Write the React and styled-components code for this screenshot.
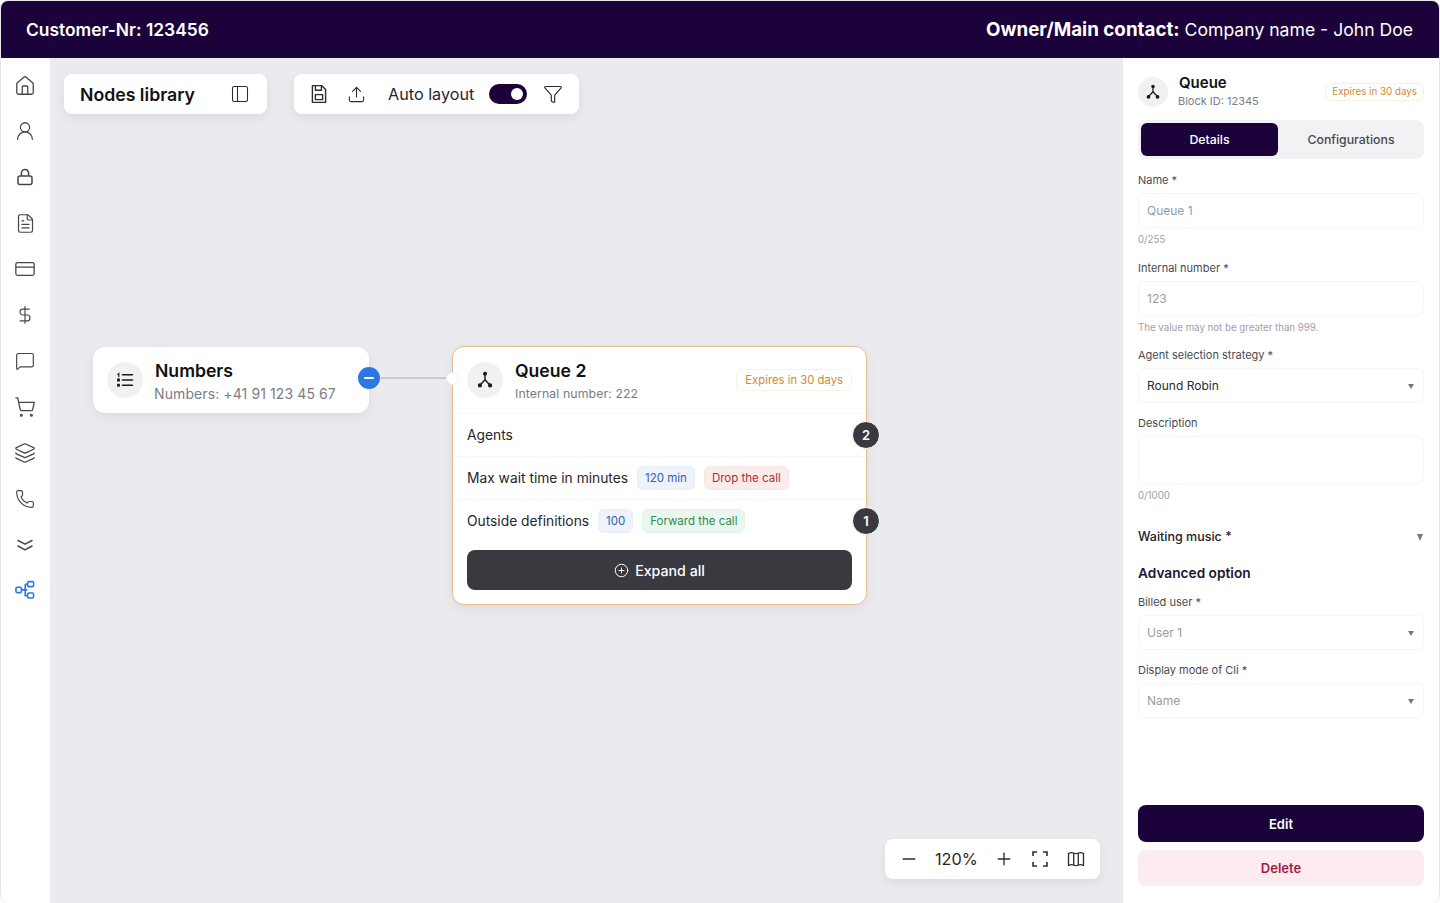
import React from 'react';
import styled, { createGlobalStyle } from 'styled-components';
import {
  House, UserRound, FileText, CreditCard, DollarSign, MessageSquare, ShoppingCart,
  Layers, Phone, PanelLeft, Upload, Funnel, Minus, Plus, CirclePlus,
} from 'lucide-react';

const Global = createGlobalStyle`
  html, body { margin: 0; padding: 0; background: #fff; }
  body { font-family: Inter, "Noto Sans", "Liberation Sans", sans-serif; color: #17171c; }
  * { box-sizing: border-box; }
`;

const Page = styled.div`
  width: 1440px;
  height: 903px;
  display: flex;
  flex-direction: column;
  overflow: hidden;
  border: 1px solid #e6e6ea;
  border-bottom: 0;
  border-radius: 8px;
  background: #ebebef;
`;

const Header = styled.header`
  height: 57px;
  flex: none;
  display: flex;
  align-items: center;
  justify-content: space-between;
  padding: 0 26px 0 25px;
  background: #1c023a;
  color: #fff;
`;

const Customer = styled.div`
  font-size: 17.4px;
  font-weight: 600;
`;

const Owner = styled.div`
  font-size: 17.6px;
  font-weight: 400;
  b { font-size: 18.8px; font-weight: 700; }
`;

const Body = styled.div`
  flex: 1;
  display: flex;
  min-height: 0;
`;

const Sidebar = styled.nav`
  width: 49px;
  flex: none;
  background: #fff;
  display: flex;
  flex-direction: column;
  align-items: center;
  padding: 17.5px 1px 0 0;
  gap: 25.9px;
`;

const SideIcon = styled.div`
  width: 20px;
  height: 20px;
  display: flex;
  align-items: center;
  justify-content: center;
  color: ${props => (props.$active ? '#2b78e4' : '#45454d')};
  svg { flex: none; display: block; }
`;

const Canvas = styled.main`
  position: relative;
  flex: 1;
  background: #ebebef;
`;

const FloatBar = styled.div`
  position: absolute;
  left: ${props => props.$x}px;
  top: ${props => props.$y}px;
  width: ${props => props.$w}px;
  height: 40px;
  display: flex;
  align-items: center;
  background: #fff;
  border-radius: 8px;
  box-shadow: 0 4px 10px rgba(30, 30, 50, 0.08);
  color: #2c2c33;
`;

const LibraryTitle = styled.span`
  flex: 1;
  font-size: 17.7px;
  font-weight: 600;
  color: #111;
  padding-left: 16px;
`;

const ToolLabel = styled.span`
  font-size: 16.2px;
  color: #26262c;
  margin: 0 15px 0 22px;
`;

const Toggle = styled.div`
  width: 38px;
  height: 20px;
  border-radius: 10px;
  background: #1c023a;
  display: flex;
  align-items: center;
  justify-content: flex-end;
  padding-right: 4px;
  margin-right: 16px;
  &::after {
    content: '';
    width: 12px;
    height: 12px;
    border-radius: 50%;
    background: #fff;
  }
`;

const ZoomValue = styled.span`
  font-size: 16.3px;
  color: #26262c;
  margin: 0 16px;
`;

const Node = styled.div`
  position: absolute;
  left: ${props => props.$x}px;
  top: ${props => props.$y}px;
  width: ${props => props.$w}px;
  background: #fff;
  border-radius: 12px;
  border: ${props => (props.$outlined ? '1px solid #e5bd8c' : '0')};
  box-shadow: 0 4px 12px rgba(30, 30, 50, 0.08);
`;

const NodeHead = styled.div`
  height: ${props => props.$h}px;
  display: flex;
  align-items: center;
  padding: 0 14px;
  border-bottom: ${props => (props.$line ? '1px solid #f7f7f8' : '0')};
`;

const IconCircle = styled.div`
  width: ${props => props.$size}px;
  height: ${props => props.$size}px;
  flex: none;
  border-radius: 50%;
  background: #f1f1f3;
  display: flex;
  align-items: center;
  justify-content: center;
  color: #18181d;
`;

const HeadText = styled.div`
  flex: 1;
  padding-left: 12px;
  padding-top: ${props => props.$drop || 0}px;
`;

const NodeTitle = styled.div`
  font-size: 17.6px;
  font-weight: 600;
  line-height: 22px;
  color: #111;
`;

const NodeSub = styled.div`
  margin-top: 3px;
  margin-left: ${props => (props.$wide ? -1 : 0)}px;
  font-size: ${props => (props.$wide ? 14 : 12.3)}px;
  line-height: 18px;
  color: #7c7c86;
  letter-spacing: 0.1px;
`;

const Badge = styled.span`
  display: inline-flex;
  align-items: center;
  height: ${props => props.$h || 24}px;
  padding: 0 ${props => props.$pad || 7}px;
  border-radius: 6px;
  border: 1px solid ${props => props.$line || 'transparent'};
  background: ${props => props.$bg || '#fff'};
  color: ${props => props.$color};
  font-size: ${props => props.$size || 11.5}px;
  white-space: nowrap;
`;

const NodeRow = styled.div`
  position: relative;
  height: ${props => props.$h || 43}px;
  display: flex;
  align-items: center;
  gap: 9px;
  padding: 0 14px;
  font-size: 13.8px;
  color: #26262c;
  border-bottom: ${props => (props.$line ? '1px solid #f7f7f8' : '0')};
`;

const Count = styled.span`
  position: absolute;
  right: -14px;
  top: 50%;
  width: 28px;
  height: 28px;
  margin-top: -14px;
  border-radius: 50%;
  background: #39393f;
  border: 1px solid #fff;
  color: #fff;
  font-size: 13px;
  font-weight: 600;
  display: flex;
  align-items: center;
  justify-content: center;
`;

const Expand = styled.button`
  display: flex;
  align-items: center;
  justify-content: center;
  gap: 6px;
  width: 385px;
  height: 40px;
  margin: 8px 0 14px 14px;
  border: 0;
  border-radius: 8px;
  background: #39393f;
  color: #fff;
  font: 500 14.2px Inter, sans-serif;
`;

const Link = styled.div`
  position: absolute;
  left: 331px;
  top: 319px;
  width: 66px;
  height: 2px;
  background: #c9c9d0;
`;

const Minusdot = styled.div`
  position: absolute;
  left: 308px;
  top: 309px;
  width: 22px;
  height: 22px;
  border-radius: 50%;
  background: #2b78e4;
  display: flex;
  align-items: center;
  justify-content: center;
  &::after {
    content: '';
    width: 10px;
    height: 2.5px;
    border-radius: 1px;
    background: #fff;
  }
`;

const Port = styled.div`
  position: absolute;
  left: 396px;
  top: 314px;
  width: 13px;
  height: 13px;
  border-radius: 50%;
  background: #fff;
  border: 1px solid #eeeef0;
`;

const Panel = styled.aside`
  width: 316px;
  flex: none;
  background: #fff;
  display: flex;
  flex-direction: column;
  padding: 17px 15px 17px 15px;
`;

const PanelHead = styled.div`
  display: flex;
  align-items: center;
  height: 33px;
`;

const PanelText = styled.div`
  flex: 1;
  padding-left: 10px;
`;

const PanelTitle = styled.div`
  font-size: 15px;
  font-weight: 600;
  line-height: 18px;
  margin-left: 1px;
  color: #111;
`;

const PanelSub = styled.div`
  font-size: 11px;
  line-height: 15px;
  margin-top: 2px;
  color: #7c7c86;
`;

const Tabs = styled.div`
  display: grid;
  grid-template-columns: 137px 1fr;
  height: 39px;
  margin-top: 12px;
  padding: 3px 0 3px 3px;
  border-radius: 8px;
  background: #f2f2f4;
`;

const Tab = styled.div`
  display: flex;
  align-items: center;
  justify-content: center;
  border-radius: 6px;
  font-size: 12.3px;
  font-weight: 500;
  color: ${props => (props.$active ? '#fff' : '#4a4a52')};
  background: ${props => (props.$active ? '#1c023a' : 'transparent')};
`;

const Form = styled.div`
  display: flex;
  flex-direction: column;
  margin-top: 14px;
`;

const Label = styled.label`
  display: block;
  font-size: 11px;
  line-height: 14px;
  margin-bottom: 6px;
  color: #4a4a52;
`;

const Field = styled.div`
  margin-bottom: ${props => props.$gap ?? 0}px;
`;

const Control = styled.div`
  display: flex;
  align-items: center;
  justify-content: space-between;
  height: ${props => props.$h || 35}px;
  padding: 0 9px 0 8px;
  border: 1px solid #f6f6f7;
  border-radius: 6px;
  font-size: 12px;
  color: ${props => (props.$filled ? '#2a2a30' : '#9a9aa2')};
`;

const Help = styled.div`
  font-size: 9.7px;
  line-height: 12px;
  margin-top: 6px;
  margin-bottom: 14.5px;
  color: #a0a0a8;
`;

const Arrow = styled.span`
  width: 0;
  height: 0;
  border-left: ${props => (props.$big ? 3.5 : 3)}px solid transparent;
  border-right: ${props => (props.$big ? 3.5 : 3)}px solid transparent;
  border-top: ${props => (props.$big ? 7 : 5)}px solid #77777f;
  margin-top: 2px;
`;

const Music = styled.div`
  display: flex;
  align-items: center;
  justify-content: space-between;
  margin-top: 11px;
  height: 18px;
  padding-right: 1px;
  font-size: 12.5px;
  font-weight: 500;
  color: #22222a;
`;

const Section = styled.div`
  margin: 18px 0 13px;
  font-size: 13.7px;
  font-weight: 600;
  line-height: 18px;
  color: #1c1630;
`;

const Actions = styled.div`
  margin-top: auto;
  display: flex;
  flex-direction: column;
  gap: 8px;
`;

const ActionButton = styled.button`
  height: ${props => props.$h}px;
  border: 0;
  border-radius: 8px;
  font: 600 13px Inter, sans-serif;
  color: ${props => (props.$danger ? '#a11d45' : '#fff')};
  background: ${props => (props.$danger ? '#fcecef' : '#1c023a')};
`;

const IconSlot = styled.span`
  display: inline-flex;
  margin-left: ${props => props.$ml || 0}px;
  margin-right: ${props => props.$mr || 0}px;
  color: #2c2c33;
`;

const QueueGlyph = ({ size = 18 }) => (
  <svg width={size} height={size} viewBox="0 0 18 18" fill="none" stroke="currentColor" strokeWidth="1.4" strokeLinecap="round">
    <path d="M9 3.5v5.2M9 8.7l-4.6 5M9 8.7l4.6 5" />
    <circle cx="9" cy="2.8" r="1.3" fill="currentColor" />
    <circle cx="3.9" cy="14.4" r="1.4" fill="currentColor" />
    <circle cx="14.1" cy="14.4" r="1.4" fill="currentColor" />
  </svg>
);

const ListGlyph = () => (
  <svg width="18" height="18" viewBox="0 0 18 18" fill="none" stroke="currentColor" strokeWidth="1.6" strokeLinecap="round">
    <path d="M6.5 3.8h10M6.5 9h10M6.5 14.2h10" />
    <path d="M1.8 3.2l1-.6v3" strokeWidth="1.2" />
    <rect x="1.2" y="7.8" width="2.6" height="2.4" fill="currentColor" strokeWidth="0.4" />
    <rect x="1.2" y="13" width="2.6" height="2.4" fill="currentColor" strokeWidth="0.4" />
  </svg>
);

const LockGlyph = () => (
  <svg width="20" height="20" viewBox="0 0 20 20" fill="none" stroke="currentColor" strokeWidth="1.5" strokeLinejoin="round">
    <rect x="3" y="9" width="14" height="8.4" rx="2" />
    <path d="M6.4 9V6.2a3.6 3.6 0 0 1 7.2 0V9" />
  </svg>
);

const FlowGlyph = () => (
  <svg width="20" height="20" viewBox="0 0 20 20" fill="none" stroke="currentColor" strokeWidth="1.6">
    <rect x="1" y="7.2" width="5.4" height="5.4" rx="1" />
    <rect x="12.6" y="1.6" width="6" height="5" rx="1.2" />
    <rect x="12.6" y="13" width="6" height="5" rx="1.2" />
    <path d="M6.4 9.9h6M10.2 4.2v11.4h2.4M10.2 4.2h2.4" />
  </svg>
);

const ChevronsGlyph = () => (
  <svg width="20" height="20" viewBox="0 0 20 20" fill="none" stroke="currentColor" strokeWidth="1.5" strokeLinecap="round" strokeLinejoin="round">
    <path d="M3 6.5l7 3.6 7-3.6M3 12l7 3.8 7-3.8" />
  </svg>
);

const FloppyGlyph = () => (
  <svg width="20" height="20" viewBox="0 0 20 20" fill="none" stroke="currentColor" strokeWidth="1.4" strokeLinejoin="round">
    <path d="M3.4 1.6h9.2l4 4v12.8H3.4z" />
    <path d="M6.4 1.6v4.6h6V1.6" />
    <rect x="6.4" y="10.6" width="7.2" height="5" />
  </svg>
);

const CornersGlyph = () => (
  <svg width="18" height="18" viewBox="0 0 18 18" fill="none" stroke="currentColor" strokeWidth="1.6">
    <path d="M2 6V2h4M12 2h4v4M16 12v4h-4M6 16H2v-4" />
  </svg>
);

const MapGlyph = () => (
  <svg width="18" height="18" viewBox="0 0 18 18" fill="none" stroke="currentColor" strokeWidth="1.3" strokeLinejoin="round">
    <path d="M1.5 3.4c2-1 4-1 5.2-.4 1.2.6 3.4.6 4.6 0 1.2-.6 3.2-.6 5.2.4v12c-2-1-4-1-5.2-.4-1.2.6-3.4.6-4.6 0-1.2-.6-3.2-.6-5.2.4z" />
    <path d="M6.7 3v12.4M11.3 3v12.4" />
  </svg>
);

const sideIcons = [
  <House size={22} strokeWidth={1.4} />,
  <UserRound size={22} strokeWidth={1.4} />,
  <LockGlyph />,
  <FileText size={21} strokeWidth={1.4} />,
  <CreditCard size={22} strokeWidth={1.4} />,
  <DollarSign size={20} strokeWidth={1.4} />,
  <MessageSquare size={20} strokeWidth={1.4} />,
  <ShoppingCart size={22} strokeWidth={1.4} />,
  <Layers size={22} strokeWidth={1.4} />,
  <Phone size={20} strokeWidth={1.4} />,
  <ChevronsGlyph />,
];

const App = () => (
  <Page>
    <Global />
    <Header>
      <Customer>Customer-Nr: 123456</Customer>
      <Owner><b>Owner/Main contact:</b> Company name - John Doe</Owner>
    </Header>
    <Body>
      <Sidebar>
        {sideIcons.map((icon, index) => (
          <SideIcon key={`side-${index}`}>{icon}</SideIcon>
        ))}
        <SideIcon $active><FlowGlyph /></SideIcon>
      </Sidebar>

      <Canvas>
        <FloatBar $x={14} $y={16} $w={203}>
          <LibraryTitle>Nodes library</LibraryTitle>
          <IconSlot $mr={17}><PanelLeft size={20} strokeWidth={1.3} /></IconSlot>
        </FloatBar>

        <FloatBar $x={244} $y={16} $w={285}>
          <IconSlot $ml={15}><FloppyGlyph /></IconSlot>
          <IconSlot $ml={18}><Upload size={19} strokeWidth={1.4} /></IconSlot>
          <ToolLabel>Auto layout</ToolLabel>
          <Toggle />
          <IconSlot><Funnel size={20} strokeWidth={1.4} /></IconSlot>
        </FloatBar>

        <Node $x={43} $y={289} $w={276}>
          <NodeHead $h={66}>
            <IconCircle $size={36}><ListGlyph /></IconCircle>
            <HeadText $drop={2}>
              <NodeTitle>Numbers</NodeTitle>
              <NodeSub $wide>Numbers: +41 91 123 45 67</NodeSub>
            </HeadText>
          </NodeHead>
        </Node>
        <Link />
        <Minusdot />

        <Node $x={402} $y={288} $w={415} $outlined>
          <NodeHead $h={67} $line>
            <IconCircle $size={36}><QueueGlyph /></IconCircle>
            <HeadText $drop={2}>
              <NodeTitle>Queue 2</NodeTitle>
              <NodeSub>Internal number: 222</NodeSub>
            </HeadText>
            <Badge $h={22} $pad={8} $size={11.3} $line="#fbf1e2" $color="#d08a35">Expires in 30 days</Badge>
          </NodeHead>
          <NodeRow $line>Agents<Count>2</Count></NodeRow>
          <NodeRow $line>
            Max wait time in minutes
            <Badge $bg="#edf2fb" $line="#e8eefa" $color="#2f62b5">120 min</Badge>
            <Badge $bg="#fbecec" $line="#f8e6e6" $color="#b03030">Drop the call</Badge>
          </NodeRow>
          <NodeRow $h={42}>
            Outside definitions
            <Badge $bg="#edf2fb" $line="#e8eefa" $color="#2f62b5">100</Badge>
            <Badge $bg="#eaf6ee" $line="#e3f3e9" $color="#2f8a56">Forward the call</Badge>
            <Count>1</Count>
          </NodeRow>
          <Expand><CirclePlus size={15} strokeWidth={1.6} />Expand all</Expand>
        </Node>
        <Port />

        <FloatBar $x={835} $y={781} $w={215}>
          <IconSlot $ml={14}><Minus size={20} strokeWidth={1.6} /></IconSlot>
          <ZoomValue>120%</ZoomValue>
          <IconSlot><Plus size={20} strokeWidth={1.6} /></IconSlot>
          <IconSlot $ml={17}><CornersGlyph /></IconSlot>
          <IconSlot $ml={18}><MapGlyph /></IconSlot>
        </FloatBar>
      </Canvas>

      <Panel>
        <PanelHead>
          <IconCircle $size={30}><QueueGlyph size={16} /></IconCircle>
          <PanelText>
            <PanelTitle>Queue</PanelTitle>
            <PanelSub>Block ID: 12345</PanelSub>
          </PanelText>
          <Badge $h={18} $pad={6} $size={9.8} $line="#fbf1e2" $color="#d08a35">Expires in 30 days</Badge>
        </PanelHead>

        <Tabs>
          <Tab $active>Details</Tab>
          <Tab>Configurations</Tab>
        </Tabs>

        <Form>
          <Field>
            <Label>Name *</Label>
            <Control>Queue 1</Control>
            <Help>0/255</Help>
          </Field>
          <Field>
            <Label>Internal number *</Label>
            <Control>123</Control>
            <Help>The value may not be greater than 999.</Help>
          </Field>
          <Field $gap={13}>
            <Label>Agent selection strategy *</Label>
            <Control $filled>Round Robin<Arrow /></Control>
          </Field>
          <Field>
            <Label>Description</Label>
            <Control $h={48} />
            <Help>0/1000</Help>
          </Field>
          <Music>Waiting music *<Arrow $big /></Music>
          <Section>Advanced option</Section>
          <Field $gap={13}>
            <Label>Billed user *</Label>
            <Control>User 1<Arrow /></Control>
          </Field>
          <Field>
            <Label>Display mode of Cli *</Label>
            <Control>Name<Arrow /></Control>
          </Field>
        </Form>

        <Actions>
          <ActionButton $h={37}>Edit</ActionButton>
          <ActionButton $h={36} $danger>Delete</ActionButton>
        </Actions>
      </Panel>
    </Body>
  </Page>
);

export default App;
